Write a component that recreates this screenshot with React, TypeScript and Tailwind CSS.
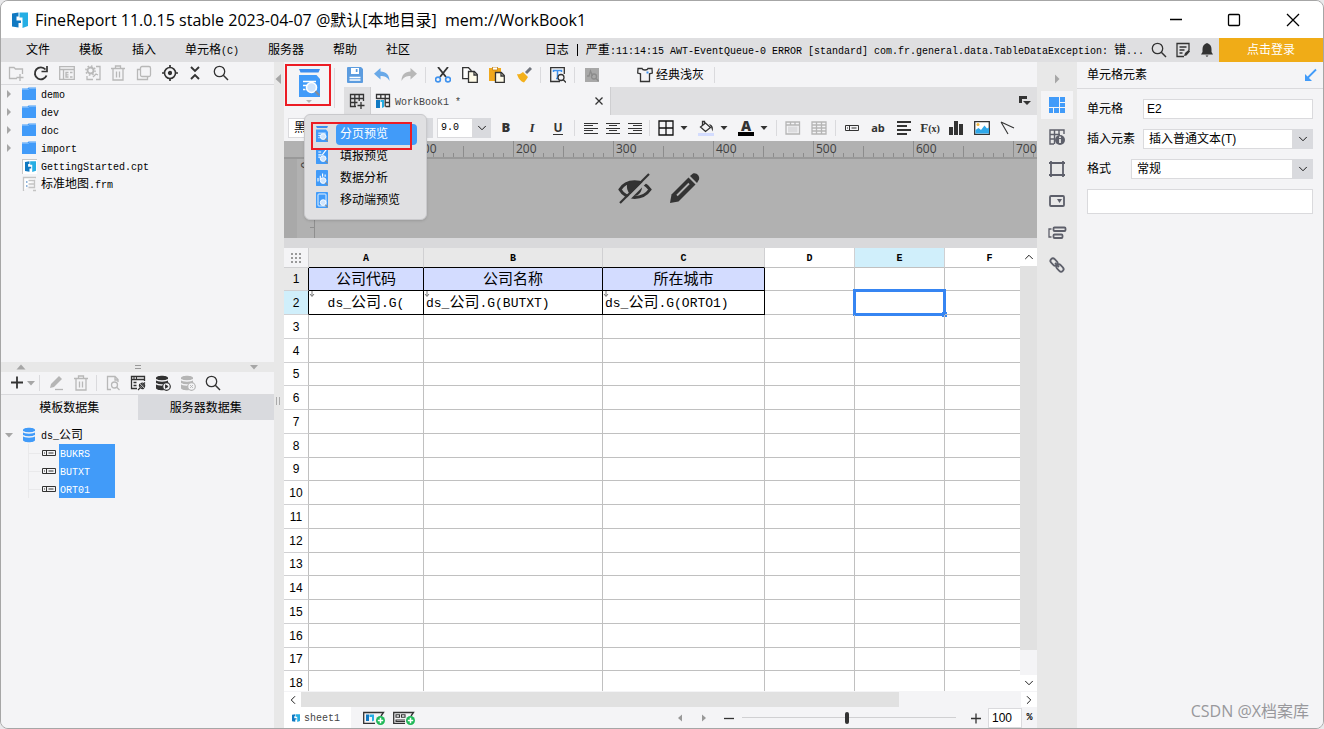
import React from "react"
import { ChevronDown, ChevronLeft, ChevronRight, ChevronUp } from "lucide-react"

const MONO = "font-['Liberation_Mono','Noto_Sans_CJK_SC',monospace]"

// Chinese runs and latin runs sit on a 12px / 6px grid, as in a terminal font
function Label({ text, big = false }: { text: string; big?: boolean }) {
  const runs = text.match(/[\u3400-\u9fff]+|[^\u3400-\u9fff]+/g) ?? []
  return (
    <span className="whitespace-pre">
      {runs.map((run, i) =>
        /[\u3400-\u9fff]/.test(run) ? (
          <span key={i}>{run}</span>
        ) : (
          <span
            key={i}
            className={`font-['Liberation_Mono',monospace] ${big ? "text-[13px]" : "text-[10px]"}`}
          >
            {run}
          </span>
        ),
      )}
    </span>
  )
}

type IconProps = { size?: number; children: React.ReactNode; className?: string }

function Svg({ size = 16, children, className = "" }: IconProps) {
  return (
    <svg
      width={size}
      height={size}
      viewBox={`0 0 ${size} ${size}`}
      fill="none"
      stroke="#333333"
      strokeWidth="1.3"
      className={`shrink-0 ${className}`}
      aria-hidden="true"
    >
      {children}
    </svg>
  )
}

function Tool({
  label,
  className = "w-[27px]",
  children,
}: {
  label: string
  className?: string
  children: React.ReactNode
}) {
  return (
    <button
      type="button"
      aria-label={label}
      className={`flex h-5 shrink-0 items-center justify-center ${className}`}
    >
      {children}
    </button>
  )
}

function Sep() {
  return <span className="mx-[3px] h-4 w-px shrink-0 bg-[#dadadd]" />
}

function Caret() {
  return (
    <Svg size={8}>
      <path d="M0.5 2h7L4 6z" fill="#333" stroke="none" />
    </Svg>
  )
}

function Triangle({ dir }: { dir: "left" | "right" | "up" | "down" }) {
  const shapes = {
    left: "M7 0v10L1.500 5z",
    right: "M3 0v10L8.500 5z",
    up: "M0.500 7.500h9L5 2.500z",
    down: "M1 3h8L5 7.500z",
  }
  return (
    <Svg size={10}>
      <path d={shapes[dir]} fill="#a6a6a6" stroke="none" />
    </Svg>
  )
}

function Logo({ size = 16 }: { size?: number }) {
  return (
    <svg width={size} height={size} viewBox="0 0 16 16" className="shrink-0" aria-hidden="true">
      <path d="M0 1.500L6.500 0.500V4.500H4.500V8.500H9V11H6.500V15.500L0 14.500z" fill="#1079c2" />
      <path d="M7.500 0.500H16V14L10.500 16V5.500H7.500z" fill="#25aee4" />
    </svg>
  )
}

const SearchIcon = () => (
  <Svg>
    <circle cx="6.500" cy="6.500" r="5.200" />
    <path d="M10.300 10.300l4.700 4.700" strokeWidth="1.500" />
  </Svg>
)

const TrashIcon = () => (
  <Svg>
    <path d="M1 3.500h14M5.500 3V1h5v2M3 4v11h10V4M6.500 6.500v6M9.500 6.500v6" stroke="#b8b8b8" />
  </Svg>
)

const FolderIcon = () => (
  <Svg>
    <path d="M1 2.500h5.500l1-1H15v12.500H1z" fill="#419bf9" stroke="none" />
    <path d="M1 3.500h6.500l1-1H15" stroke="#8cc2fb" strokeWidth="0.700" />
  </Svg>
)

const FieldIcon = () => (
  <Svg>
    <path d="M1.500 5.500h13v5h-13zM5.500 5.500v5M7.500 8h5M3 8h1" strokeWidth="1" />
  </Svg>
)

function DbIcon({ color = "#333", badge = "" }: { color?: string; badge?: string }) {
  return (
    <Svg>
      <path d="M1 3c0-3 12-3 12 0v10c0 3-12 3-12 0z" fill={color} stroke="none" />
      <path d="M1 4.500c2 2 10 2 12 0M1 8.500c2 2 10 2 12 0" stroke="#f4f4f6" />
      {badge && (
        <>
          <circle cx="11.500" cy="11.500" r="3.800" fill="#f4f4f6" stroke={color} strokeWidth="1.200" />
          <path d={badge} stroke={color} fill={color} strokeWidth="0.900" />
        </>
      )}
    </Svg>
  )
}

function PreviewIcon({ kind = "page", size = 12 }: { kind?: string; size?: number }) {
  return (
    <svg width={size} height={(size * 4) / 3} viewBox="0 0 21 28" className="shrink-0" aria-hidden="true">
      {kind === "page" ? (
        <>
          <path d="M0 0h21l-1.500 3.500h-18z" fill="#3b8ef0" />
          <path d="M0 6h17.500l3.500 4v18H0z" fill="#419bf9" />
          <path d="M4 12.500h13M4 16.500h4M4 20.500h2.500" stroke="#fff" strokeWidth="1.600" />
        </>
      ) : (
        <rect width="21" height="28" rx="1.500" fill="#419bf9" />
      )}
      {kind === "fill" && <path d="M4 12h6M4 16h3M11 12l7-9M4 7h5" stroke="#fff" strokeWidth="2" />}
      {kind === "data" && <path d="M3.500 20v-6M7.500 18v-8M11.500 12V6M16 12V8" stroke="#fff" strokeWidth="2" />}
      {kind === "mobile" && (
        <rect x="3.500" y="3.500" width="14" height="21" rx="1.500" fill="none" stroke="#fff" strokeWidth="1.500" />
      )}
      <circle cx="12.500" cy="18.500" r="5" fill="#cfe4fc" stroke="#fff" strokeWidth="1.600" />
      <path d="M16.300 22.300l4 4" stroke="#858c96" strokeWidth="2" />
    </svg>
  )
}

const menus = ["文件", "模板", "插入", "单元格(C)", "服务器", "帮助", "社区"]

function TitleBar() {
  return (
    <header className="flex h-[37px] shrink-0 items-center bg-white pl-[11px]">
      <Logo />
      <h1 className="ml-[7px] flex-1 whitespace-pre font-['Open_Sans','Noto_Sans_CJK_SC',sans-serif] text-base text-black">
        FineReport 11.0.15 stable 2023-04-07 @默认[本地目录]{"  "}mem://WorkBook1
      </h1>
      <Tool label="最小化" className="w-[58px]">
        <Svg>
          <path d="M2 7.500h12" stroke="#000" />
        </Svg>
      </Tool>
      <Tool label="最大化" className="w-[58px]">
        <Svg>
          <rect x="2.500" y="2.500" width="11" height="11" rx="1" stroke="#000" />
        </Svg>
      </Tool>
      <Tool label="关闭" className="w-[60px]">
        <Svg>
          <path d="M2 2l12 12M14 2L2 14" stroke="#000" />
        </Svg>
      </Tool>
    </header>
  )
}

function MenuBar() {
  return (
    <nav className="flex h-6 shrink-0 items-center bg-[#dfdfe1] text-xs">
      <div className="flex flex-1 gap-[29px] pl-[25px]">
        {menus.map((m) => (
          <button key={m} type="button">
            <Label text={m} />
          </button>
        ))}
      </div>
      <Label text="日志" />
      <span className="mx-2 h-3 w-px bg-black" />
      <Label text="严重:11:14:15 AWT-EventQueue-0 ERROR [standard] com.fr.general.data.TableDataException: 错..." />
      <Tool label="搜索" className="ml-[3px] w-6">
        <SearchIcon />
      </Tool>
      <Tool label="日志列表" className="w-6">
        <Svg>
          <path d="M14 8V1.500H2v13h7M4.500 5h7M4.500 8h5M4.500 11h3" />
          <path d="M9 14l1-3 4-3.500 1 2-3.500 4z" fill="#333" stroke="none" />
        </Svg>
      </Tool>
      <Tool label="通知" className="w-6">
        <Svg>
          <path d="M8 1c3 1 4.500 3 4.500 6v3l1.500 2.500H2L3.500 10V7C3.500 4 5 2 8 1zM6.500 13.500h3L8 15z" fill="#333" stroke="none" />
        </Svg>
      </Tool>
      <button type="button" className="h-full w-[104px] bg-[#f0ac17] text-white">
        点击登录
      </button>
    </nav>
  )
}

const files = [
  { name: "demo", kind: "folder" },
  { name: "dev", kind: "folder" },
  { name: "doc", kind: "folder" },
  { name: "import", kind: "folder" },
  { name: "GettingStarted.cpt", kind: "cpt" },
  { name: "标准地图.frm", kind: "frm" },
]

function FileTree() {
  return (
    <ul className="min-h-0 flex-1 overflow-hidden">
      {files.map((f) => (
        <li key={f.name} className="flex h-[18px] items-center pl-[3px]">
          <span className="flex w-[17px] shrink-0">
            {f.kind === "folder" && (
              <Svg size={10}>
                <path d="M3 1v8l4-4z" fill="#a6a6a6" stroke="none" />
              </Svg>
            )}
          </span>
          {f.kind === "folder" && <FolderIcon />}
          {f.kind === "cpt" && (
            <span className="ml-px flex h-[15px] w-[15px] items-center justify-center border border-r-0 border-b-0 border-[#c8c8c8] bg-white">
              <Logo size={11} />
            </span>
          )}
          {f.kind === "frm" && (
            <Svg>
              <path d="M2.500 15V1.500H15" fill="#fff" stroke="#c4c4c4" />
              <path d="M5 6h1.500M5 10h1.500" stroke="#6b9bd0" />
              <path d="M7.500 4.500h6v7h-6M7.500 8h6M12 14.500h3" stroke="#c4c4c4" />
            </Svg>
          )}
          <span className="ml-1">
            <Label text={f.name} />
          </span>
        </li>
      ))}
    </ul>
  )
}

function LeftPanel() {
  return (
    <aside className="flex w-[273px] shrink-0 flex-col bg-[#f4f4f6]">
      <div className="flex h-[23px] shrink-0 items-center border-b border-[#dadadd] pl-0.5">
        <div className="grid w-[231px] grid-cols-9">
          <Tool label="新建文件夹" className="w-full">
            <Svg>
              <path d="M9 13.500H1.500v-11H6l1.500 1.500h7V9M8.500 12.500h7M12 9v7" stroke="#b8b8b8" />
            </Svg>
          </Tool>
          <Tool label="刷新" className="w-full">
            <Svg>
              <path d="M13.500 10.500A6 6 0 1 1 12.500 4.500" strokeWidth="1.900" />
              <path d="M14 1v5.500H8.500" strokeWidth="1.700" />
            </Svg>
          </Tool>
          <Tool label="打开目录" className="w-full">
            <Svg>
              <path d="M0.700 1.700h14.600v12.600H0.700zM1 4.500h14M4.500 5v9M9.500 7.500H7v4.500h2.500M7 9.800h2.500M11 7.500h2.500M11 12h2.500" stroke="#b8b8b8" />
            </Svg>
          </Tool>
          <Tool label="模板设置" className="w-full">
            <Svg>
              <circle cx="5.500" cy="5.500" r="3" stroke="#b8b8b8" strokeWidth="1.800" />
              <circle cx="5.500" cy="5.500" r="4.600" stroke="#b8b8b8" strokeWidth="1.500" strokeDasharray="1.600 2" />
              <path d="M11 1.500h4v13h-4M2 11v3.500h6M8 12l3-3 2 1" stroke="#b8b8b8" />
            </Svg>
          </Tool>
          <Tool label="删除" className="w-full">
            <TrashIcon />
          </Tool>
          <Tool label="复制" className="w-full">
            <Svg>
              <rect x="4.500" y="1.500" width="10" height="10" rx="1.500" stroke="#b8b8b8" />
              <path d="M4 4.500H1.500v10h10V12" stroke="#b8b8b8" />
            </Svg>
          </Tool>
          <Tool label="定位" className="w-full">
            <Svg>
              <circle cx="8" cy="8" r="5.500" strokeWidth="1.600" />
              <circle cx="8" cy="8" r="1.500" fill="#333" />
              <path d="M8 0v3M8 13v3M0 8h3M13 8h3" strokeWidth="1.700" />
            </Svg>
          </Tool>
          <Tool label="折叠" className="w-full">
            <Svg>
              <path d="M4 2l4 4 4-4M4 14l4-4 4 4" strokeWidth="1.900" />
            </Svg>
          </Tool>
          <Tool label="搜索模板" className="w-full">
            <SearchIcon />
          </Tool>
        </div>
      </div>
      <FileTree />
      <div className="flex h-[10px] shrink-0 items-center justify-between bg-[#e8e8e8] px-[15px]">
        <Triangle dir="up" />
        <span className="h-1 w-1.5 border-y border-[#999]" />
        <Triangle dir="down" />
      </div>
      <div className="flex h-[23px] shrink-0 items-center border-b border-[#dadadd] pl-[7px]">
        <Tool label="新增数据集" className="w-7 gap-px">
          <Svg>
            <path d="M8 1.500v12M2 7.500h12" strokeWidth="1.800" />
          </Svg>
          <Triangle dir="down" />
        </Tool>
        <Sep />
        <Tool label="编辑" className="w-[25px]">
          <Svg>
            <path d="M2 13l1-4 8-8 3 3-8 8-4 1z" fill="#b5b5b5" stroke="none" />
            <path d="M7 14.500h8" stroke="#b5b5b5" />
          </Svg>
        </Tool>
        <Tool label="删除数据集" className="w-[25px]">
          <TrashIcon />
        </Tool>
        <Sep />
        <Tool label="预览数据集" className="w-[25px]">
          <Svg>
            <path d="M6 14.500H2.500v-13H10l3 3V7M10 1.500V5h3" stroke="#b8b8b8" />
            <circle cx="9.500" cy="10" r="3" stroke="#b8b8b8" />
            <path d="M11.500 12l3 3" stroke="#b8b8b8" />
          </Svg>
        </Tool>
        <Tool label="连接设置" className="w-[25px]">
          <Svg>
            <path d="M14.500 6V1.500h-13v12H7M2 4.500h12M3.500 7.500h3M3.500 10.500h3M3.500 3h1M6 3h1" />
            <path d="M8 15l2-2M15 7.500l-2 2M9.500 9.500c-1 2 2 5 4 4zM11 8.500c2-1.500 4.500 1 3.500 3.500z" strokeWidth="1.100" />
          </Svg>
        </Tool>
        <Tool label="运行数据集" className="w-[25px]">
          <DbIcon badge="M10.500 9.800v3.400l2.600-1.700z" />
        </Tool>
        <Tool label="断开数据集" className="w-[25px]">
          <DbIcon color="#b5b5b5" badge="M10 10l3 3M13 10l-3 3" />
        </Tool>
        <Tool label="搜索数据集" className="w-[25px]">
          <SearchIcon />
        </Tool>
      </div>
      <div className="flex h-[25px] shrink-0" role="tablist">
        <button type="button" role="tab" aria-selected="true" className="flex-1 bg-[#f0f0f2]">
          模板数据集
        </button>
        <button type="button" role="tab" aria-selected="false" className="flex-1 bg-[#d9dade]">
          服务器数据集
        </button>
      </div>
      <div className="h-[308px] shrink-0 pt-1.5">
        <div className="flex h-[18px] items-center pl-[3px]">
          <span className="w-[17px]">
            <Triangle dir="down" />
          </span>
          <span className="pl-px">
            <DbIcon color="#419bf9" />
          </span>
          <span className="ml-[3px]">
            <Label text="ds_公司" />
          </span>
        </div>
        <ul className="ml-[27px] w-[87px] border-l border-[#e9e9eb]">
          {["BUKRS", "BUTXT", "ORT01"].map((f) => (
            <li key={f} className="flex h-[18px] items-center">
              <span className="w-3 border-t border-[#e9e9eb]" />
              <FieldIcon />
              <span className="ml-0.5 flex h-full flex-1 items-center bg-[#419bf9] pl-px text-white">
                <Label text={f} />
              </span>
            </li>
          ))}
        </ul>
      </div>
    </aside>
  )
}

const previews = [
  { name: "分页预览", kind: "page" },
  { name: "填报预览", kind: "fill" },
  { name: "数据分析", kind: "data" },
  { name: "移动端预览", kind: "mobile" },
]

function PreviewMenu() {
  return (
    <ul className="absolute top-[52px] left-5 z-10 h-[106px] w-[123px] rounded-md border border-[#c9c9cc] bg-[#e0e0e2] pt-2 shadow-sm">
      {previews.map((p, i) => (
        <li key={p.kind} className="flex h-[22px] items-center pl-[11px]">
          <PreviewIcon kind={p.kind} />
          <button
            type="button"
            className={`ml-2 flex h-[21px] w-[81px] items-center rounded-sm pl-1 ${i === 0 ? "bg-[#419bf9] text-white" : ""}`}
          >
            {p.name}
          </button>
        </li>
      ))}
      <li aria-hidden="true" className="absolute top-[7px] left-1.5 h-7 w-[101px] border-2 border-[#ec1c24]" />
    </ul>
  )
}

function TopTools() {
  return (
    <div className="flex h-[25px] shrink-0 items-center">
      <Tool label="保存">
        <Svg>
          <path d="M0 1q0-1 1-1h13l2 2v13q0 1-1 1H1q-1 0-1-1z" fill="#5c9cdf" stroke="none" />
          <path d="M4 1h8v6H4z" fill="#fff" stroke="none" />
          <path d="M2.500 10.500h11M2.500 13h11" stroke="#fff" strokeWidth="1.500" />
          <path d="M8.800 2h1.700v3H8.800z" fill="#5c9cdf" stroke="none" />
        </Svg>
      </Tool>
      <Tool label="撤销">
        <Svg>
          <path d="M6.500 1v3.500C12 4.500 15.500 8 15.500 14c-2-4-5-5-9-5v3.500L0 6.800z" fill="#69a9e8" stroke="none" />
        </Svg>
      </Tool>
      <Tool label="重做">
        <Svg>
          <path d="M9.500 1v3.500C4 4.500 0.500 8 0.500 14c2-4 5-5 9-5v3.500L16 6.800z" fill="#b8b8b8" stroke="none" />
        </Svg>
      </Tool>
      <Sep />
      <Tool label="剪切">
        <Svg>
          <path d="M3 0l8 10M13 0L5 10" strokeWidth="1.800" />
          <circle cx="3" cy="12.500" r="2.400" stroke="#3f92ee" strokeWidth="1.600" />
          <circle cx="13" cy="12.500" r="2.400" stroke="#3f92ee" strokeWidth="1.600" />
        </Svg>
      </Tool>
      <Tool label="复制单元格">
        <Svg>
          <path d="M0.700 0.700h5.800l2.500 2.500v8.500H0.700z" fill="#fff" />
          <path d="M6.500 4.500h5.800l3 3v8h-8.800z" fill="#fffbe8" />
          <path d="M12 4.500v3.500h3" />
        </Svg>
      </Tool>
      <Tool label="粘贴">
        <Svg>
          <path d="M0 1h12v13H0z" fill="#f0a81c" stroke="none" />
          <path d="M3.500 0h5v3h-5z" fill="#fff" stroke="#c07d10" strokeWidth="0.800" />
          <path d="M6.500 5.500h5.800l3 3v7h-8.800z" fill="#fffbe8" />
          <path d="M12 5.500V9h3" />
        </Svg>
      </Tool>
      <Tool label="格式刷">
        <Svg>
          <path d="M15 1l-5 5" stroke="#70747c" strokeWidth="3" />
          <path d="M1 7c3 1 4-0.500 6-2l5 5c-1.500 2-2 3.500-4 5.500-3-1-6-4-7-8.500z" fill="#f3b01b" stroke="none" />
        </Svg>
      </Tool>
      <Sep />
      <Tool label="文本预览">
        <Svg>
          <path d="M10 14.500H0.700V0.700h13.600V7" />
          <path d="M3.500 5V3.500h8V5M7.500 3.500V11M6 11.500h3" stroke="#3f92ee" strokeWidth="1.500" />
          <circle cx="11" cy="10.500" r="3" fill="#f4f4f6" />
          <path d="M13 12.500l3 3" />
        </Svg>
      </Tool>
      <Sep />
      <Tool label="数据预览">
        <Svg>
          <rect x="1" y="1" width="14" height="14" fill="#a8a8a8" stroke="none" />
          <path d="M3 9h2l1.500-5 2 5" stroke="#8c8c8c" />
          <circle cx="10" cy="9.500" r="2.500" stroke="#8c8c8c" />
          <path d="M12 11.500l2.500 2.500" stroke="#8c8c8c" />
        </Svg>
      </Tool>
      <button type="button" className="ml-8 flex shrink-0 items-center gap-[3px]">
        <Svg>
          <path d="M5 1.500H1L0.700 6l2.800 0.800v7.700h9V6.800L15.300 6 15 1.500h-4c-0.500 2-5.500 2-6 0z" />
          <path d="M9.500 5.500h2" stroke="#3f92ee" strokeWidth="2" />
        </Svg>
        经典浅灰
      </button>
      <span className="ml-2.5 h-4 w-px bg-[#dadadd]" />
    </div>
  )
}

function TabStrip() {
  return (
    <div className="ml-[3px] flex h-7 shrink-0 items-center bg-[#dfdfe1]">
      <Tool label="新建模板" className="w-[26px]">
        <Svg>
          <path d="M7 13.500H1.500v-12h13V8M1.500 5.500h13M1.500 9.500h7M5.800 1.500v12M10.200 1.500V8M8.500 12.500h7M12 9v7" />
        </Svg>
      </Tool>
      <div className="flex h-full w-[241px] items-center border-x border-[#cfcfd1] bg-[#f4f4f6] pr-1 pl-1">
        <Svg>
          <path d="M1.500 6V1.500h13v12h-4M1.500 5.500h13M5.800 1.500V6M10.200 1.500v12M10 9.500h4" />
          <path d="M1 7h4v8H1z" fill="#1079c2" stroke="none" />
          <path d="M5.500 7H9v7l-2 1V9H5.500z" fill="#25aee4" stroke="none" />
        </Svg>
        <span className="ml-1 flex-1 text-[#444]">
          <Label text="WorkBook1 *" />
        </span>
        <Tool label="关闭模板" className="mr-px w-3">
          <Svg size={12}>
            <path d="M2.500 2.500l7 7M9.500 2.500l-7 7" />
          </Svg>
        </Tool>
      </div>
      <span className="flex-1" />
      <Tool label="模板列表" className="mr-1">
        <Svg>
          <path d="M2 3h8v3H5v4H2z" fill="#333" stroke="none" />
          <path d="M6 8h8l-4 4z" fill="#333" stroke="none" />
        </Svg>
      </Tool>
    </div>
  )
}

function FormatBar() {
  return (
    <div className="flex h-[26px] shrink-0 items-center overflow-hidden bg-[#f4f4f6]">
      <div className="ml-1 flex h-5 w-[145px] shrink-0">
        <select aria-label="字体" className="min-w-0 flex-1 appearance-none border border-[#dadadd] bg-white pl-[5px] text-xs">
          <option>黑体</option>
        </select>
        <span className="w-5 bg-[#d9dade]" />
      </div>
      <div className="ml-1 flex h-5 w-[54px] shrink-0">
        <select
          aria-label="字号"
          className={`min-w-0 flex-1 appearance-none border border-[#dadadd] bg-white pl-[3px] text-[10px] ${MONO}`}
        >
          <option>9.0</option>
        </select>
        <span className="flex w-[18px] items-center justify-center bg-[#d9dade]">
          <ChevronDown size={14} strokeWidth={1.5} />
        </span>
      </div>
      <Tool label="加粗" className="ml-0.5 w-[26px]">
        <b className="font-['Open_Sans',sans-serif] text-[13px] font-extrabold text-[#333]">B</b>
      </Tool>
      <Tool label="斜体" className="w-[26px]">
        <i className="font-['Liberation_Serif',serif] text-[13px] font-bold text-[#333]">I</i>
      </Tool>
      <Tool label="下划线" className="w-[26px]">
        <b className="border-b border-[#333] font-['Open_Sans',sans-serif] text-xs leading-3 text-[#333]">U</b>
      </Tool>
      <Sep />
      <Tool label="左对齐" className="ml-0.5 w-[22px]">
        <Svg>
          <path d="M1 3.500h14M1 5.500h9M1 8.500h14M1 10.500h9M1 13.500h14" strokeWidth="1" />
        </Svg>
      </Tool>
      <Tool label="居中" className="w-[22px]">
        <Svg>
          <path d="M1 3.500h14M4 5.500h8M1 8.500h14M4 10.500h8M1 13.500h14" strokeWidth="1" />
        </Svg>
      </Tool>
      <Tool label="右对齐" className="w-[22px]">
        <Svg>
          <path d="M1 3.500h14M6 5.500h9M1 8.500h14M6 10.500h9M1 13.500h14" strokeWidth="1" />
        </Svg>
      </Tool>
      <Sep />
      <Tool label="边框" className="w-10 gap-1.5">
        <Svg>
          <path d="M1 1h14v14H1zM8 1v14M1 8h14" stroke="#111" />
        </Svg>
        <Caret />
      </Tool>
      <Tool label="背景色" className="w-10 gap-1.5">
        <Svg>
          <path d="M0 13h16v3H0z" fill="#d3dcff" stroke="none" />
          <path d="M2.500 7l5-4 5 4.500-5 4zM4.500 5V1.500h2V4" />
          <path d="M11 4c4 1 4.500 4 3.500 7.500L13 7z" fill="#333" stroke="none" />
        </Svg>
        <Caret />
      </Tool>
      <Tool label="字体颜色" className="w-10 gap-1.5">
        <span className="flex h-4 w-4 items-center justify-center border-b-4 border-black pb-px font-['Open_Sans',sans-serif] text-sm leading-3 font-extrabold text-[#333]">
          A
        </span>
        <Caret />
      </Tool>
      <Sep />
      <Tool label="合并单元格" className="w-[26px]">
        <Svg>
          <path d="M1 2h13.500v12H1zM1 5h13.500M5.500 2v3M10 2v3" stroke="#b5b5b5" />
          <path d="M3 6.500h9.500v6H3z" fill="#dcdcde" stroke="none" />
        </Svg>
      </Tool>
      <Tool label="取消合并" className="w-[26px]">
        <Svg>
          <path d="M1 2h14v12H1zM1 5h14M1 8h14M1 11h14M5.500 2v12M10.500 2v12" stroke="#b5b5b5" />
        </Svg>
      </Tool>
      <Sep />
      <Tool label="数据列" className="w-[26px]">
        <FieldIcon />
      </Tool>
      <Tool label="普通文本" className="w-[26px]">
        <b className="font-['Open_Sans',sans-serif] text-[11px] text-[#333]">ab</b>
      </Tool>
      <Tool label="富文本" className="w-[26px]">
        <Svg>
          <path d="M1 2h14M1 6h10M1 10h14M1 14h10" strokeWidth="2" />
        </Svg>
      </Tool>
      <Tool label="公式" className="w-[26px]">
        <span className="font-['Liberation_Serif',serif] text-[13px] font-bold text-[#333]">
          F<span className="text-[10px]">(x)</span>
        </span>
      </Tool>
      <Tool label="图表" className="w-[26px]">
        <Svg>
          <path d="M1 7h4v8H1zM6 1h4v14H6zM11 4h4v11h-4z" fill="#333" stroke="none" />
        </Svg>
      </Tool>
      <Tool label="图片" className="w-[26px]">
        <Svg>
          <path d="M0.700 1.700h14.600v12.600H0.700z" fill="#fff" />
          <path d="M1.500 13.500V10l3-2 2.500 2 3.500-4.500 2.500 3 2-1v6z" fill="#2fa8ea" stroke="none" />
          <circle cx="4" cy="4.500" r="1.500" fill="#f3b83d" stroke="none" />
        </Svg>
      </Tool>
      <Tool label="斜线" className="w-[26px]">
        <Svg>
          <path d="M1 2l13 6M1 2l7 12" strokeWidth="1.100" />
        </Svg>
      </Tool>
    </div>
  )
}

const marks = [0, 100, 200, 300, 400, 500, 600, 700]

function RulerPane() {
  return (
    <div className="flex h-[97px] shrink-0 flex-col overflow-hidden bg-[#b1b1b1]">
      <div className="flex h-[18px] shrink-0 overflow-hidden border-b-2 border-[#999] pl-[29px]">
        {marks.map((m) => (
          <div key={m} className="relative flex w-[100px] shrink-0 items-end">
            {[0, 1, 2, 3, 4, 5, 6, 7, 8, 9].map((t) => (
              <span
                key={t}
                className={`w-2.5 border-l border-[#8c8c8c] ${t === 0 ? "h-4" : t === 5 ? "h-[11px]" : "h-1"}`}
              />
            ))}
            <span className="absolute top-0 left-[3px] font-['Open_Sans',sans-serif] text-xs leading-4 text-[#404040]">
              {m}
            </span>
          </div>
        ))}
      </div>
      <div className="flex min-h-0 flex-1">
        <div className="w-[13px] bg-[#a9a9a9]" />
        <div className="flex w-[18px] flex-col items-end justify-between border-r border-[#8f8f8f] pb-2.5">
          <span className="flex w-full origin-center -rotate-90 justify-center font-['Open_Sans',sans-serif] text-xs leading-3 text-[#404040]">
            0
          </span>
          <span className="h-px w-1 bg-[#8f8f8f]" />
        </div>
        <div className="flex flex-1 justify-center gap-3.5 pt-[13px] pr-8">
          <Svg size={36}>
            <path d="M3 17.500C9 7 26 7 33 17.500 26 28 9 28 3 17.500z" strokeWidth="3" />
            <path d="M10 12c4-3 12-3 15 0 1 8-4 12-7.500 12S9 20 10 12z" fill="#333" stroke="none" />
            <path d="M5 33L35 3" stroke="#b1b1b1" strokeWidth="3.500" />
            <path d="M3 31L32 2" strokeWidth="2.200" />
          </Svg>
          <Svg size={36}>
            <path d="M3 31l1.500-8.500L21.500 5.500l7 7L11.500 29.500z" fill="#333" stroke="none" />
            <path d="M23 4l3-2.500c4-1 7 3 6 6L30 11z" fill="#333" stroke="none" />
            <path d="M10 23.500L22 11.500" stroke="#b1b1b1" strokeWidth="1.800" />
          </Svg>
        </div>
      </div>
    </div>
  )
}

const columns = [
  { id: "A", col: "w-[115px]", head: "公司代码", value: "ds_公司.G(" },
  { id: "B", col: "w-[179px]", head: "公司名称", value: "ds_公司.G(BUTXT)" },
  { id: "C", col: "w-[162px]", head: "所在城市", value: "ds_公司.G(ORTO1)" },
  { id: "D", col: "w-[90px]" },
  { id: "E", col: "w-[90px]" },
  { id: "F", col: "w-[90px]" },
]
const rows = Array.from({ length: 18 }, (_, i) => i + 1)

function Sheet() {
  return (
    <div className="min-w-0 flex-1 overflow-hidden bg-white">
      <table className="w-[751px] table-fixed border-separate border-spacing-0 text-xs">
        <colgroup>
          <col className="w-[25px]" />
          {columns.map((c) => (
            <col key={c.id} className={c.col} />
          ))}
        </colgroup>
        <thead>
          <tr className={MONO}>
            <th aria-label="全选" className="h-5 border-r border-b border-[#d0d0d2] bg-[#f4f4f6] p-0">
              <Svg size={12} className="mx-auto">
                <path d="M1 2h10M1 6h10M1 10h10" stroke="#999" strokeWidth="2" strokeDasharray="2 2" />
              </Svg>
            </th>
            {columns.map((c) => (
              <th
                key={c.id}
                scope="col"
                className={`h-5 border-r border-r-[#d0d0d2] border-b p-0 pt-0.5 text-[10px] ${
                  c.head ? "border-b-black bg-[#e8e8e8]" : c.id === "E" ? "border-b-[#c0c0c0] bg-[#d0effb]" : "border-b-[#c0c0c0]"
                }`}
              >
                {c.id}
              </th>
            ))}
          </tr>
        </thead>
        <tbody>
          {rows.map((r) => (
            <tr key={r} className={r % 4 === 1 ? "h-[23px]" : "h-6"}>
              <th
                scope="row"
                className={`border-r border-b border-b-[#d0d0d2] p-0 font-['Liberation_Sans',sans-serif] font-normal ${
                  r === 1 ? "border-r-black bg-[#e8e8e8]" : r === 2 ? "border-r-black bg-[#d0effb]" : "border-r-[#c0c0c0]"
                }`}
              >
                {r}
              </th>
              {columns.map((c) => {
                if (c.head && r === 1)
                  return (
                    <td key={c.id} className="border-r border-b border-black bg-[#d3dcff] p-0 text-center text-[15px] leading-5">
                      {c.head}
                    </td>
                  )
                if (c.value && r === 2)
                  return (
                    <td
                      key={c.id}
                      className={`relative border-r border-b border-black p-0 text-[15px] leading-5 ${c.id === "A" ? "text-center" : "pl-0.5"}`}
                    >
                      <Label text={c.value} big />
                      <Svg size={6} className="absolute top-0 left-0">
                        <path d="M3 0v5M1 3l2 2.500L5 3" stroke="#777" strokeWidth="1" />
                      </Svg>
                    </td>
                  )
                return (
                  <td key={c.id} className="relative border-r border-b border-[#c0c0c0] p-0">
                    {c.id === "E" && r === 2 && (
                      <span className="absolute -inset-x-0.5 -top-0.5 -bottom-0.5 border-[3px] border-[#3685f2]">
                        <span className="absolute -right-1 -bottom-1 h-[5px] w-[5px] bg-[#3685f2]" />
                      </span>
                    )}
                  </td>
                )
              })}
            </tr>
          ))}
        </tbody>
      </table>
    </div>
  )
}

function StatusBar() {
  return (
    <footer className="flex h-[21px] shrink-0 items-center bg-[#f4f4f6]">
      <button type="button" className="flex h-full w-[67px] items-center gap-1 bg-white pl-2 text-[#444]">
        <Logo size={8} />
        <Label text="sheet1" />
      </button>
      {["新建报表", "新建表单"].map((name, i) => (
        <button key={name} type="button" aria-label={name} className={i === 0 ? "ml-3" : "ml-2"}>
          <svg width="22" height="16" viewBox="0 0 22 16" fill="none" stroke="#333" strokeWidth="1.300" aria-hidden="true">
            <path d="M12 13.300H0.700V2.500h19.800L18 6" />
            {i === 0 ? (
              <>
                <path d="M3 4.500h3v6.500H3z" fill="#1079c2" stroke="none" />
                <path d="M6.500 4.500H11v6L9 11.500V7H6.500z" fill="#25aee4" stroke="none" />
              </>
            ) : (
              <path d="M3 4.800h3.500v2.500H3zM8.500 4.800H12v2.500H8.500zM12 10H3v1.500h9" strokeWidth="1.100" />
            )}
            <circle cx="17.500" cy="10.500" r="4.500" fill="#20b858" stroke="none" />
            <path d="M14.800 10.500h5.400M17.500 7.800v5.400" stroke="#fff" strokeWidth="1.500" />
          </svg>
        </button>
      ))}
      <span className="flex-1" />
      <Tool label="上一页" className="w-6">
        <Svg size={10}>
          <path d="M7 1.500v7L3 5z" fill="#999" stroke="none" />
        </Svg>
      </Tool>
      <Tool label="下一页" className="w-6">
        <Svg size={10}>
          <path d="M3 1.500v7L7 5z" fill="#999" stroke="none" />
        </Svg>
      </Tool>
      <Tool label="缩小" className="w-[26px]">
        <Svg size={12}>
          <path d="M1 6.500h10" strokeWidth="1.300" />
        </Svg>
      </Tool>
      <input
        type="range"
        aria-label="缩放"
        defaultValue={49}
        className="h-4 w-[214px] appearance-none bg-transparent [&::-webkit-slider-runnable-track]:h-px [&::-webkit-slider-runnable-track]:bg-[#d0d0d2] [&::-webkit-slider-thumb]:-mt-[5px] [&::-webkit-slider-thumb]:h-3 [&::-webkit-slider-thumb]:w-1 [&::-webkit-slider-thumb]:appearance-none [&::-webkit-slider-thumb]:rounded-sm [&::-webkit-slider-thumb]:bg-[#333]"
      />
      <Tool label="放大" className="ml-2 w-6">
        <Svg size={12}>
          <path d="M1 6.500h10M6 1.500v10" strokeWidth="1.300" />
        </Svg>
      </Tool>
      <input
        aria-label="缩放比例"
        defaultValue="100"
        className="h-5 w-[34px] border border-[#dadadd] bg-white pl-[3px] font-['Liberation_Sans',sans-serif] text-xs"
      />
      <span className="w-[15px] text-center font-['Liberation_Mono',monospace] text-[10px] font-bold">%</span>
    </footer>
  )
}

function Editor() {
  return (
    <main className="flex min-w-0 flex-1 flex-col bg-[#f4f4f6]">
      <div className="flex h-[53px] shrink-0">
        <div className="relative flex w-[57px] shrink-0 items-start pt-0.5 pl-px">
          <button
            type="button"
            aria-label="预览"
            className="flex h-[42px] w-[46px] flex-col items-center justify-between border-2 border-[#ec1c24] pt-[3px] pl-0.5"
          >
            <PreviewIcon size={21} />
            <Svg size={6}>
              <path d="M0 2h6L3 5z" fill="#b5b5b5" stroke="none" />
            </Svg>
          </button>
          <span className="mt-1 ml-[3px] h-10 w-px bg-[#dadadd]" />
          <PreviewMenu />
        </div>
        <div className="flex min-w-0 flex-1 flex-col">
          <TopTools />
          <TabStrip />
        </div>
      </div>
      <FormatBar />
      <RulerPane />
      <div className="h-[10px] shrink-0 bg-[#d9d9db]" />
      <div className="flex min-h-0 flex-1">
        <Sheet />
        <div className="flex w-[17px] shrink-0 flex-col">
          <button type="button" aria-label="向上滚动" className="flex h-[18px] items-center justify-center bg-white">
            <ChevronUp size={14} strokeWidth={1.5} />
          </button>
          <span className="mb-[25px] flex-1 bg-[#e1e1e1]" />
          <button type="button" aria-label="向下滚动" className="flex h-4 items-center justify-center bg-white">
            <ChevronDown size={14} strokeWidth={1.5} />
          </button>
        </div>
      </div>
      <div className="flex h-4 shrink-0 items-stretch pt-px">
        <button type="button" aria-label="向左滚动" className="flex w-[17px] items-center justify-center bg-white">
          <ChevronLeft size={14} strokeWidth={1.5} />
        </button>
        <span className="mr-[122px] flex-1 bg-[#e1e1e1]" />
        <button type="button" aria-label="向右滚动" className="flex w-4 items-center justify-center bg-white">
          <ChevronRight size={14} strokeWidth={1.5} />
        </button>
      </div>
      <StatusBar />
    </main>
  )
}

const sideTools = [
  {
    name: "单元格元素",
    art: <path d="M0 0h10v10H0zM11 0h5v5h-5zM11 6h5v4h-5zM0 11h4v5H0zM5 11h5v5H5zM11 11h5v5h-5z" fill="#419bf9" stroke="none" />,
  },
  {
    name: "单元格属性",
    art: (
      <>
        <path d="M5 15H1V1h14v4M1 5.500h10M1 10h4M5.500 1v14M10 1v4" stroke="#5d5f6a" strokeWidth="1.400" />
        <circle cx="11" cy="11" r="5" fill="#5d5f6a" stroke="none" />
        <path d="M11 10v4M11 7.500v1.500" stroke="#e8e8e8" strokeWidth="1.800" />
      </>
    ),
  },
  {
    name: "悬浮元素",
    art: (
      <>
        <path d="M2 2h12v12H2z" stroke="#5d5f6a" strokeWidth="1.800" />
        <path d="M0 2h3M13 2h3M0 14h3M13 14h3M2 0v3M14 0v3M2 13v3M14 13v3" stroke="#5d5f6a" strokeWidth="1.800" />
      </>
    ),
  },
  {
    name: "控件设置",
    art: (
      <>
        <rect x="1" y="3" width="14" height="10" rx="1" stroke="#5d5f6a" strokeWidth="1.800" />
        <path d="M8 6h5l-2.500 4z" fill="#5d5f6a" stroke="none" />
      </>
    ),
  },
  {
    name: "条件属性",
    art: (
      <>
        <path d="M2.500 4H0v8h2.500" stroke="#5d5f6a" />
        <rect x="4.500" y="2.500" width="12" height="3.500" rx="1" stroke="#5d5f6a" strokeWidth="1.800" />
        <rect x="4.500" y="9.500" width="9" height="3.500" rx="1" stroke="#5d5f6a" strokeWidth="1.800" />
      </>
    ),
  },
  {
    name: "超级链接",
    art: (
      <>
        <rect x="-4" y="-2.500" width="8" height="5" rx="2.500" transform="translate(5 5) rotate(45)" stroke="#5d5f6a" strokeWidth="1.800" />
        <rect x="-4" y="-2.500" width="8" height="5" rx="2.500" transform="translate(11 11) rotate(45)" stroke="#5d5f6a" strokeWidth="1.800" />
        <path d="M6 6l4 4" stroke="#5d5f6a" strokeWidth="1.800" />
      </>
    ),
  },
]

function SideStrip() {
  return (
    <div className="flex w-10 shrink-0 flex-col items-center gap-1 bg-[#e8e8e8] pt-3">
      <Svg size={10}>
        <path d="M3 0.500v9L7.500 5z" fill="#a6a6a6" stroke="none" />
      </Svg>
      <div className="mt-[3px] flex flex-col gap-1">
        {sideTools.map((t, i) => (
          <button
            key={t.name}
            type="button"
            aria-label={t.name}
            className={`flex h-7 w-8 items-center justify-center ${i === 0 ? "bg-[#f4f4f6]" : ""}`}
          >
            <Svg className="overflow-visible">{t.art}</Svg>
          </button>
        ))}
      </div>
    </div>
  )
}

function Arrow() {
  return (
    <span className="pointer-events-none flex w-5 items-center justify-center bg-[#d9dade]">
      <ChevronDown size={14} strokeWidth={1.5} />
    </span>
  )
}

function Properties() {
  return (
    <aside className="flex w-[246px] shrink-0 flex-col bg-[#f4f4f6]">
      <div className="flex h-[27px] items-center justify-between border-b border-[#dadadd] pr-[5px] pl-2.5">
        <h2>单元格元素</h2>
        <Tool label="弹出" className="w-4">
          <Svg size={14}>
            <path d="M13 1.500L4 10.500" stroke="#419bf9" strokeWidth="1.800" />
            <path d="M2 6v7h7z" fill="#419bf9" stroke="none" />
          </Svg>
        </Tool>
      </div>
      <div className="flex flex-col gap-2.5 pt-2.5 pr-2.5 pl-2.5">
        <div className="flex h-5 items-center">
          <label htmlFor="cell" className="w-14">
            单元格
          </label>
          <input
            id="cell"
            defaultValue="E2"
            className="h-5 min-w-0 flex-1 border border-[#dadadd] bg-white pl-[3px] font-['Liberation_Sans',sans-serif] text-xs"
          />
        </div>
        <div className="flex h-5 items-center">
          <label htmlFor="insert" className="w-14">
            插入元素
          </label>
          <div className="flex h-5 min-w-0 flex-1">
            <select id="insert" className="min-w-0 flex-1 appearance-none border border-[#dadadd] bg-white pl-[5px]">
              <option>插入普通文本(T)</option>
            </select>
            <Arrow />
          </div>
        </div>
        <div className="flex h-5 items-center">
          <label htmlFor="format" className="w-11">
            格式
          </label>
          <div className="flex h-5 min-w-0 flex-1">
            <select id="format" className="min-w-0 flex-1 appearance-none border border-[#dadadd] bg-white pl-[5px]">
              <option>常规</option>
            </select>
            <Arrow />
          </div>
        </div>
        <input aria-label="格式内容" className="h-[25px] w-full border border-[#dadadd] bg-white px-1" />
      </div>
      <p className="mt-auto pr-3.5 pb-[7px] text-right font-['Open_Sans','Noto_Sans_CJK_SC',sans-serif] text-base leading-5 text-[#98989c]">
        CSDN @X档案库
      </p>
    </aside>
  )
}

export default function App() {
  return (
    <div className="h-screen bg-[#e9e9eb]">
      <div className="flex h-full flex-col overflow-hidden rounded-lg border border-[#a6a6a6] font-['Liberation_Sans','Noto_Sans_CJK_SC',sans-serif] text-xs text-black">
        <TitleBar />
        <MenuBar />
        <div className="flex min-h-0 flex-1">
          <LeftPanel />
          <div className="flex w-[10px] shrink-0 flex-col bg-[#e8e8e8] pt-3">
            <Triangle dir="left" />
            <span className="mt-[313px] ml-0.5 h-2 w-1 border-x border-[#aaa]" />
          </div>
          <Editor />
          <SideStrip />
          <Properties />
        </div>
      </div>
    </div>
  )
}
